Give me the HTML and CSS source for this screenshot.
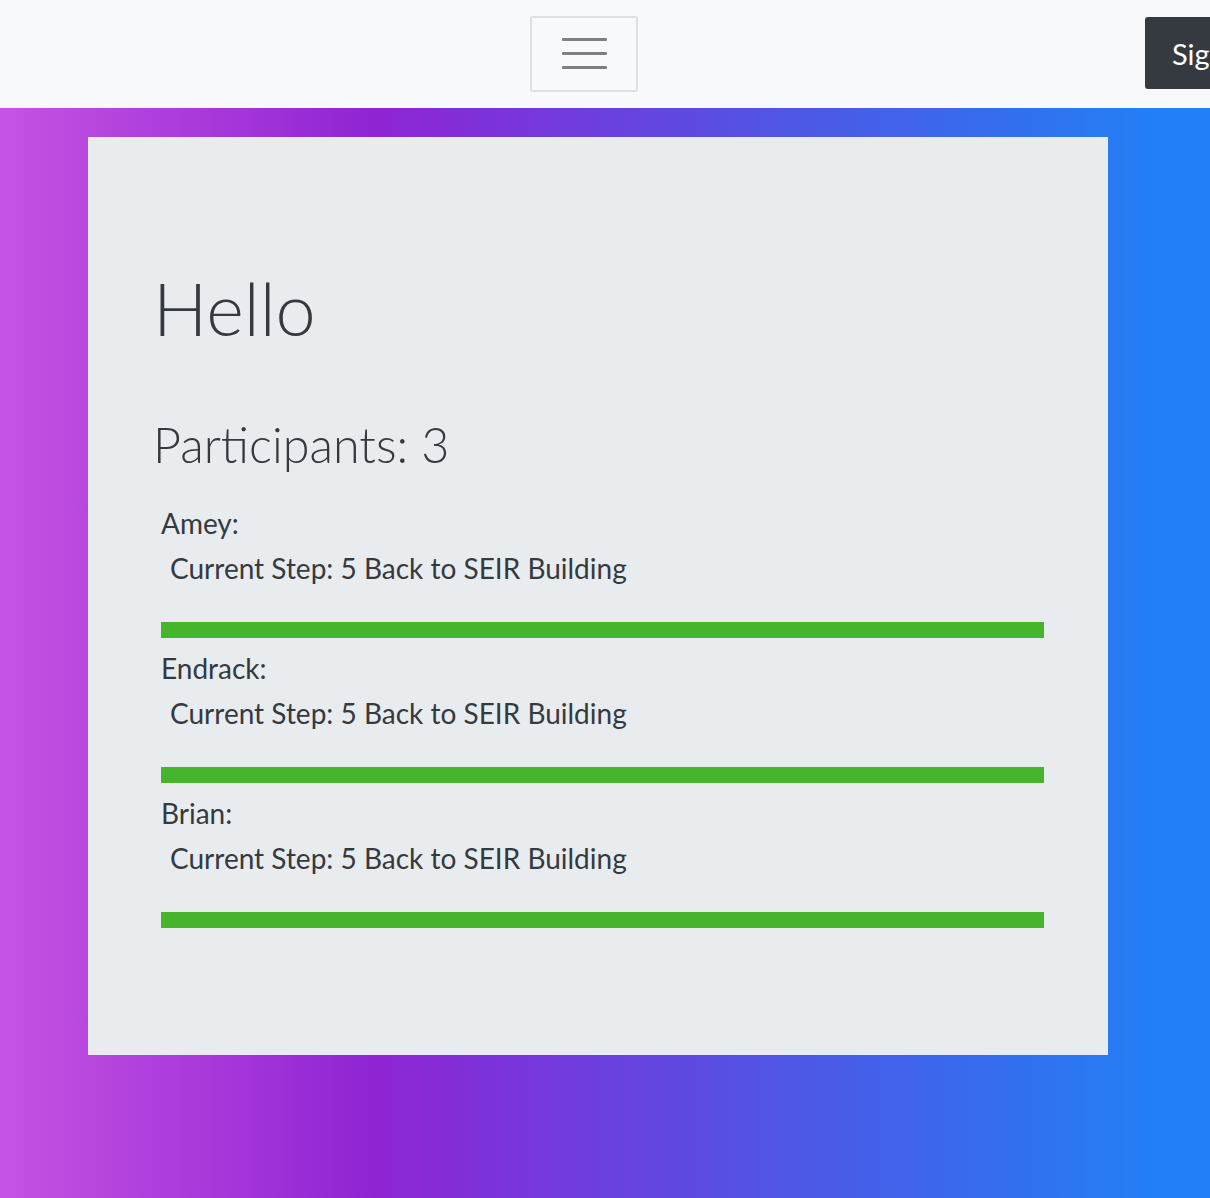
FILE: index.html
```html
<!DOCTYPE html>
<html>
<head>
<meta charset="utf-8">
<link rel="stylesheet" href="styles.css">
</head>
<body>
<nav class="navbar">
  <button class="toggler" aria-label="menu">
    <span class="bar"></span><span class="bar"></span><span class="bar"></span>
  </button>
  <button class="signin">Sign In</button>
</nav>
<main class="main">
  <section class="jumbotron">
    <h1 class="title">Hello</h1>
    <h2 class="subtitle">Participants: 3</h2>
    <div class="participant">
      <div class="name">Amey:</div>
      <div class="step">Current Step: 5 Back to SEIR Building</div>
      <div class="progress"><div class="progress-fill" style="width:100%"></div></div>
    </div>
    <div class="participant">
      <div class="name">Endrack:</div>
      <div class="step">Current Step: 5 Back to SEIR Building</div>
      <div class="progress"><div class="progress-fill" style="width:100%"></div></div>
    </div>
    <div class="participant">
      <div class="name">Brian:</div>
      <div class="step">Current Step: 5 Back to SEIR Building</div>
      <div class="progress"><div class="progress-fill" style="width:100%"></div></div>
    </div>
  </section>
</main>
</body>
</html>
```
FILE: styles.css
```css
html, body {
  margin: 0;
  padding: 0;
}
body {
  width: 1210px;
  height: 1198px;
  overflow: hidden;
  font-family: Lato, "Liberation Sans", sans-serif;
  color: #343a40;
  background: linear-gradient(to right, #c653e3 0%, #8f24d3 31%, #4f56e6 65%, #2180f5 96%, #2180f5 100%);
}
.navbar {
  height: 108px;
  background: #f8f9fa;
  display: flex;
  align-items: center;
  box-sizing: border-box;
  white-space: nowrap;
}
.toggler {
  flex-shrink: 0;
  margin-left: 530px;
  width: 108px;
  height: 76px;
  box-sizing: border-box;
  border: 2px solid #dedfe0;
  border-radius: 3px;
  background: transparent;
  display: flex;
  flex-direction: column;
  align-items: center;
  justify-content: center;
  gap: 11px;
  padding: 0;
  margin-top: -1px;
}
.toggler .bar {
  display: block;
  width: 45px;
  height: 3px;
  background: #7f7f7f;
  border-radius: 1px;
}
.signin {
  flex-shrink: 0;
  margin-left: 507px;
  margin-top: -2px;
  height: 72px;
  padding: 0 26px 0 27px;
  border: none;
  border-radius: 3px;
  background: #343a40;
  color: #fff;
  font-family: Lato, "Liberation Sans", sans-serif;
  font-size: 29px;
}
.main {
  padding: 29px 102px 0 88px;
}
.jumbotron {
  background: #e9ecef;
  height: 918px;
  box-sizing: border-box;
  padding: 128px 64px 0 65px;
}
.title {
  margin: 0;
  font-size: 72px;
  font-weight: 300;
  line-height: 1.2;
}
.subtitle {
  margin: 64px 0 0;
  font-size: 48.5px;
  font-weight: 300;
  line-height: 1.2;
}
.participant {
  padding-left: 8px;
  margin-top: 0;
}
.subtitle + .participant {
  margin-top: 32px;
}
.name {
  font-size: 28px;
  line-height: 34px;
}
.step {
  font-size: 28px;
  line-height: 34px;
  padding-left: 9px;
  margin-top: 11px;
}
.progress {
  margin-top: 37px;
  height: 16px;
  background: #e9ecef;
  margin-bottom: 13px;
}
.progress-fill {
  height: 100%;
  background: #47b52b;
}
```
